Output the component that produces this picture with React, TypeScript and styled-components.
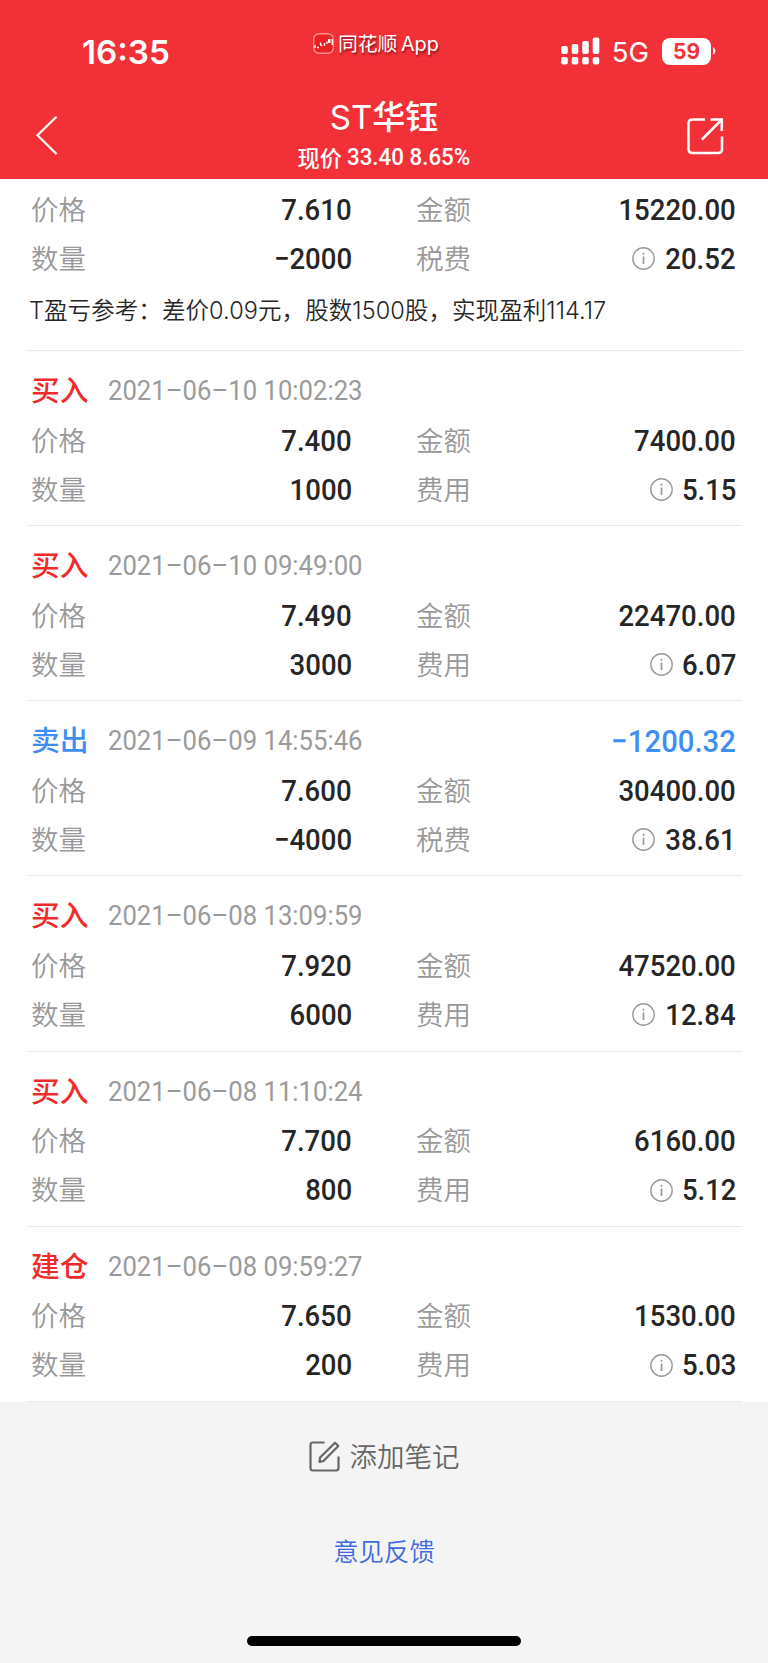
import React from 'react';
import styled, { createGlobalStyle } from 'styled-components';

const cjk = '"Noto Sans CJK SC", sans-serif';
const RED = '#f23038';

const GlobalStyle = createGlobalStyle`
  * { box-sizing: border-box; }
  body { margin: 0; background: #f4f4f4; font-family: Inter, ${cjk}; }
  svg { display: block; }
`;

const Screen = styled.div`
  width: 768px;
  height: 1663px;
  display: flex;
  flex-direction: column;
  background: #f4f4f4;
  overflow: hidden;
  white-space: nowrap;
`;

const Header = styled.header`
  flex: none;
  height: 179px;
  background: ${RED};
  color: #fff;
`;

const StatusBar = styled.div`
  height: 90px;
  padding: 0 52px 0 82px;
  display: grid;
  grid-template-columns: 231px 140px 1fr;
`;

const Clock = styled.div`
  padding-top: 32px;
  font-size: 33.2px;
  line-height: 40px;
  font-weight: 600;
`;

const Brand = styled.div`
  display: flex;
  align-items: center;
  height: 24px;
  margin-top: 31px;
  gap: 4px;
  font-size: 19.8px;
  line-height: 26px;
  word-spacing: -2px;
  text-shadow: 1px 2px 2px rgba(80, 0, 0, 0.6);
`;

const BrandName = styled.span`
  margin-top: 2px;
`;

const Signals = styled.div`
  display: flex;
  justify-content: flex-end;
  align-items: center;
  height: 28px;
  margin-top: 37px;
`;

const Network = styled.span`
  margin: 2px 13px 0 12px;
  font-size: 27.5px;
  line-height: 28px;
`;

const Battery = styled.span`
  width: 49px;
  height: 27px;
  border-radius: 8px;
  background: #fff;
  color: ${RED};
  font-size: 21px;
  line-height: 28px;
  font-weight: 700;
  text-align: center;
`;

const NavBar = styled.div`
  display: flex;
  justify-content: space-between;
  height: 89px;
  padding: 0 35px;
`;

const NavIcon = styled.div`
  width: 47px;
  padding-top: 26px;
`;

const Heading = styled.div`
  text-align: center;
`;

const Title = styled.div`
  margin-top: 7px;
  font-size: 33px;
  line-height: 40px;
  font-weight: 500;
`;

const Ticker = styled.span`
  font-weight: 400;
`;

const Quote = styled.div`
  display: flex;
  justify-content: center;
  margin-top: 4px;
  padding-left: 9px;
  font: 500 22.3px/32px ${cjk};
`;

const Digits = styled.span<{ $size: number; $weight?: number; $origin?: string; $squeeze?: number }>`
  display: inline-block;
  font-family: Roboto, sans-serif;
  font-size: ${p => p.$size}px;
  font-weight: ${p => p.$weight ?? 500};
  transform: scaleX(${p => p.$squeeze ?? 0.918});
  transform-origin: ${p => p.$origin ?? 'right'} center;
`;

const List = styled.main`
  flex: none;
  background: #fff;
  padding: 0 26.5px 0 27px;
`;

const Record = styled.section<{ $first?: boolean }>`
  height: ${p => (p.$first ? 172 : 175.15)}px;
  padding: ${p => (p.$first ? 6 : 15)}px 5.5px 0 4px;
  border-bottom: 1px solid #e8e8e8;
`;

const RecordHead = styled.div`
  display: flex;
  align-items: center;
  height: 50px;
`;

const Tag = styled.span<{ $sell?: boolean }>`
  width: 77px;
  margin-top: -4px;
  color: ${p => (p.$sell ? '#3f8ef2' : '#f02a2a')};
  font: 500 28.8px/46px ${cjk};
`;

const Time = styled.span`
  flex: 1;
  margin-top: -1px;
  color: #9b9b9b;
`;

const Profit = styled.span`
  color: #3f8ef2;
`;

const Row = styled.div`
  display: grid;
  grid-template-columns: 100px 221px 64px 100px 1fr;
  align-items: center;
  height: 49px;
`;

const Label = styled.span<{ $col?: number }>`
  grid-column: ${p => p.$col ?? 1};
  margin-top: -4px;
  color: #999;
  font: 350 27.5px/44px ${cjk};
`;

const Value = styled.span`
  display: flex;
  justify-content: flex-end;
  align-items: center;
  gap: 4px;
  color: #262626;
  line-height: 48px;
`;

const Note = styled.div`
  margin: 10px 0 0 -2px;
  color: #262626;
  font-size: 23.5px;
  line-height: 36px;
  font-weight: 350;
  letter-spacing: 0.08px;
`;

const Footer = styled.footer`
  flex: 1;
  display: flex;
  flex-direction: column;
  align-items: center;
`;

const AddNote = styled.div`
  display: flex;
  align-items: center;
  gap: 10px;
  height: 40px;
  margin-top: 35px;
  color: #666;
  font: 350 27.5px/36px ${cjk};
`;

const NoteText = styled.span`
  margin-top: -4px;
`;

const Feedback = styled.div`
  margin-top: 53px;
  color: #4169e1;
  font: 350 25.4px/40px ${cjk};
`;

const HomeBar = styled.div`
  width: 274px;
  height: 10px;
  margin: auto 0 17px;
  border-radius: 5px;
  background: #000;
`;

const SignalIcon = () => (
  <svg width="39" height="28" viewBox="0 0 39 28" fill="#fff">
    {[9, 7, 4, 0.5].map((top, i) => (
      <g key={top}>
        <rect x={i * 10.5 + 0.2} y={top} width="6.6" height={17 - top} rx="2" />
        <rect x={i * 10.5 + 0.2} y="20" width="6.6" height="7.5" rx="2" />
      </g>
    ))}
  </svg>
);

const BrandIcon = () => (
  <svg width="21" height="21" viewBox="0 0 21 21" fill="none">
    <rect x="0.7" y="0.7" width="19.6" height="19.6" rx="5.5" fill="#e92125" stroke="#fa9092" strokeWidth="1.4" />
    <path d="M2 12v3M4 14.500h2M7.500 9.500v2l1.500 1.500M11.500 10v3M14 8.500v2.500M19.200 6v6" stroke="#fff" strokeWidth="1.3" />
    <rect x="15" y="6" width="2.5" height="4" fill="#fff" />
  </svg>
);

const BackIcon = () => (
  <svg width="24" height="40" viewBox="0 0 24 40" fill="none" stroke="#fff" strokeWidth="2.2">
    <path d="M21.500 .7 2.500 19.300 21.500 38" />
  </svg>
);

const ShareIcon = () => (
  <svg width="38" height="40" viewBox="0 0 38 40" fill="none" stroke="#fff" strokeWidth="2.5">
    <path d="M19 3.500H6.500Q2.500 3.500 2.500 7.500v25.500q0 4 4 4h25.500q4 0 4-4V20.500M24.500 3.500h11.300v11.500M35.800 3.500 16 23.500" />
  </svg>
);

const InfoIcon = () => (
  <svg width="23" height="23" viewBox="0 0 23 23" fill="none" stroke="#999">
    <circle cx="11.5" cy="11.5" r="10.7" strokeWidth="1.4" />
    <path d="M11.5 9.5v7.500M11.5 5.800v2" strokeWidth="1.7" />
  </svg>
);

const EditIcon = () => (
  <svg width="31" height="31" viewBox="0 0 31 31" fill="none" stroke="#666" strokeWidth="2.2" strokeLinejoin="round">
    <path d="M15.500 1.500H4Q1.500 1.500 1.500 4v23q0 2.500 2.500 2.500h23q2.500 0 2.500-2.500V15.500" />
    <path d="M26 1.800 29.300 5 14.500 20l-4 .8.6-4.300Z" />
  </svg>
);

interface Trade {
  tag?: string;
  time?: string;
  price: string;
  amount: string;
  qty: string;
  fee: string;
  profit?: string;
  note?: string;
  sell?: boolean;
}

const trades: Trade[] = [
  { price: '7.610', amount: '15220.00', qty: '−2000', fee: '20.52', sell: true, note: 'T盈亏参考：差价0.09元，股数1500股，实现盈利114.17' },
  { tag: '买入', time: '2021–06–10 10:02:23', price: '7.400', amount: '7400.00', qty: '1000', fee: '5.15' },
  { tag: '买入', time: '2021–06–10 09:49:00', price: '7.490', amount: '22470.00', qty: '3000', fee: '6.07' },
  { tag: '卖出', time: '2021–06–09 14:55:46', price: '7.600', amount: '30400.00', qty: '−4000', fee: '38.61', profit: '−1200.32', sell: true },
  { tag: '买入', time: '2021–06–08 13:09:59', price: '7.920', amount: '47520.00', qty: '6000', fee: '12.84' },
  { tag: '买入', time: '2021–06–08 11:10:24', price: '7.700', amount: '6160.00', qty: '800', fee: '5.12' },
  { tag: '建仓', time: '2021–06–08 09:59:27', price: '7.650', amount: '1530.00', qty: '200', fee: '5.03' },
];

const TradeRecord = ({ t }: { t: Trade }) => (
  <Record $first={!t.tag}>
    {t.tag && (
      <RecordHead>
        <Tag $sell={t.sell}>{t.tag}</Tag>
        <Time><Digits $size={28} $weight={400} $origin="left" $squeeze={0.917}>{t.time}</Digits></Time>
        {t.profit && <Profit><Digits $size={31.5} $squeeze={0.93}>{t.profit}</Digits></Profit>}
      </RecordHead>
    )}
    <Row>
      <Label>价格</Label>
      <Value><Digits $size={30}>{t.price}</Digits></Value>
      <Label $col={4}>金额</Label>
      <Value><Digits $size={30}>{t.amount}</Digits></Value>
    </Row>
    <Row>
      <Label>数量</Label>
      <Value><Digits $size={30}>{t.qty}</Digits></Value>
      <Label $col={4}>{t.sell ? '税费' : '费用'}</Label>
      <Value><InfoIcon /><Digits $size={30}>{t.fee}</Digits></Value>
    </Row>
    {t.note && <Note>{t.note}</Note>}
  </Record>
);

export default function App() {
  return (
    <Screen>
      <GlobalStyle />
      <Header>
        <StatusBar>
          <Clock>16:35</Clock>
          <Brand><BrandIcon /><BrandName>同花顺 App</BrandName></Brand>
          <Signals>
            <SignalIcon />
            <Network>5G</Network>
            <Battery>59</Battery>
            <svg width="5" height="10" viewBox="0 0 5 10" fill="#fff"><path d="M2 1q5 4 0 8Z" /></svg>
          </Signals>
        </StatusBar>
        <NavBar>
          <NavIcon><BackIcon /></NavIcon>
          <Heading>
            <Title><Ticker>ST</Ticker>华钰</Title>
            <Quote>现价&nbsp;<Digits $size={24} $origin="left" $squeeze={0.93}>33.40 8.65%</Digits></Quote>
          </Heading>
          <NavIcon><ShareIcon /></NavIcon>
        </NavBar>
      </Header>
      <List>
        {trades.map(t => <TradeRecord key={t.time ?? 'first'} t={t} />)}
      </List>
      <Footer>
        <AddNote><EditIcon /><NoteText>添加笔记</NoteText></AddNote>
        <Feedback>意见反馈</Feedback>
        <HomeBar />
      </Footer>
    </Screen>
  );
}
